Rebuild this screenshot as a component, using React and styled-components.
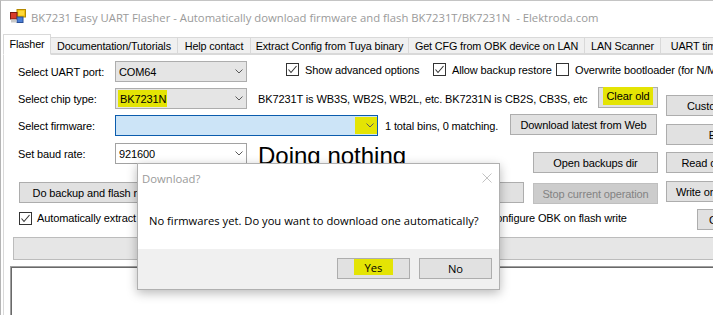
import React from 'react';
import styled, { createGlobalStyle } from 'styled-components';

const Global = createGlobalStyle`
  html, body { margin: 0; padding: 0; background: #fff; overflow: hidden; }
  #root { width: 713px; height: 315px; }
  * { box-sizing: border-box; }
`;

const UI = `"Liberation Sans", Arial, sans-serif`;
const SEGOE = `"Open Sans", "Noto Sans", sans-serif`;
const YELLOW = '#e4e404';

const Window = styled.div`
  position: relative;
  width: 713px;
  height: 315px;
  overflow: hidden;
  background: #fff;
  border-top: 1px solid #c4c4c4;
  border-left: 1px solid #b4b4b4;
  display: flex;
  flex-direction: column;
  font-family: ${UI};
  font-size: 11px;
  letter-spacing: -0.12px;
  color: #000;
`;

const TitleBar = styled.div`
  height: 32px;
  flex: none;
  display: flex;
  align-items: center;
  padding-left: 9px;
  gap: 5px;
`;

const TitleText = styled.span`
  font-family: ${SEGOE};
  font-size: 11.3px;
  letter-spacing: 0;
  color: #9a9a9a;
  white-space: pre;
`;

const TabStrip = styled.div`
  height: 21px;
  flex: none;
  display: flex;
  align-items: flex-end;
  padding-left: 2px;
  position: relative;
  z-index: 1;
`;

const Tab = styled.div`
  width: ${p => p.$w}px;
  height: ${p => (p.$active ? 21 : 17)}px;
  flex: none;
  display: flex;
  align-items: center;
  justify-content: center;
  white-space: nowrap;
  overflow: hidden;
  font-size: 10.8px;
  background: ${p => (p.$active ? '#fff' : '#f0f0f0')};
  border: 1px solid #d9d9d9;
  border-left: ${p => (p.$first ? '1px solid #d9d9d9' : 'none')};
  border-bottom: ${p => (p.$active ? '1px solid #fff' : '1px solid #d9d9d9')};
  padding-bottom: ${p => (p.$active ? 2 : 0)}px;
  margin-bottom: ${p => (p.$active ? -1 : 0)}px;
`;

const TabPage = styled.div`
  flex: 1;
  margin-left: 2px;
  border-top: 1px solid #d9d9d9;
  border-left: 1px solid #d9d9d9;
  display: flex;
  flex-direction: column;
  padding-top: 6px;
  min-height: 0;
`;

const Columns = styled.div`
  height: 176px;
  flex: none;
  display: flex;
`;

const MainCol = styled.div`
  width: 662px;
  flex: none;
  display: flex;
  flex-direction: column;
`;

const RightCol = styled.div`
  flex: 1;
  display: flex;
  flex-direction: column;
  align-items: flex-start;
`;

const Row = styled.div`
  height: ${p => p.$h || 21}px;
  margin-top: ${p => p.$mt || 0}px;
  flex: none;
  display: flex;
  align-items: flex-start;
  padding-left: 14px;
  white-space: nowrap;
`;

const Label = styled.div`
  width: 97px;
  height: 21px;
  flex: none;
  display: flex;
  align-items: center;
`;

const Combo = styled.div`
  width: ${p => p.$w}px;
  height: 21px;
  flex: none;
  display: flex;
  align-items: center;
  padding-left: 3px;
  background: ${p => (p.$focus ? '#cce4f7' : p.$edit ? '#fff' : '#e5e5e5')};
  border: 1px solid ${p => (p.$focus ? '#0b5cad' : p.$edit ? '#a2a2a2' : '#adadad')};
`;

const ComboText = styled.span`
  flex: 1;
  display: flex;
  align-items: center;
`;

const ChevronBox = styled.span`
  width: ${p => (p.$hl ? 22 : 15)}px;
  height: 17px;
  flex: none;
  display: flex;
  align-items: center;
  justify-content: center;
  padding-left: ${p => (p.$hl ? 7 : 0)}px;
  background: ${p => (p.$hl ? YELLOW : 'transparent')};
`;

const Highlight = styled.span`
  background: ${YELLOW};
  height: ${p => p.$h || 17}px;
  display: inline-flex;
  align-items: center;
  padding: 0 ${p => p.$pr ?? 1}px 0 ${p => p.$pl ?? 2}px;
  margin-left: ${p => p.$ml || 0}px;
  margin-top: ${p => p.$mt || 0}px;
  align-self: ${p => (p.$top ? 'flex-start' : 'center')};
`;

const Text = styled.div`
  width: ${p => p.$w}px;
  height: 21px;
  margin-left: ${p => p.$ml || 0}px;
  flex: none;
  display: flex;
  align-items: center;
  overflow: visible;
`;

const BigText = styled.div`
  width: ${p => p.$w}px;
  margin-left: ${p => p.$ml || 0}px;
  margin-top: ${p => p.$mt || 0}px;
  flex: none;
  font-size: 24px;
  line-height: 24px;
  letter-spacing: 0;
  height: 24px;
`;

const Button = styled.div`
  width: ${p => p.$w}px;
  height: 21px;
  margin-left: ${p => p.$ml || 0}px;
  margin-top: ${p => p.$mt || 0}px;
  flex: none;
  display: flex;
  align-items: center;
  justify-content: center;
  white-space: nowrap;
  background: ${p => (p.$disabled ? '#cccccc' : '#e1e1e1')};
  border: 1px solid ${p => (p.$disabled ? '#bfbfbf' : '#adadad')};
  color: ${p => (p.$disabled ? '#838383' : '#000')};
  font-family: ${p => (p.$segoe ? SEGOE : UI)};
  font-size: ${p => (p.$segoe ? 11.2 : 11)}px;
  letter-spacing: ${p => (p.$segoe ? 0 : -0.12)}px;
`;

const Check = styled.div`
  width: ${p => (p.$w ? `${p.$w}px` : 'auto')};
  height: ${p => p.$h || 17}px;
  margin-left: ${p => p.$ml || 0}px;
  flex: none;
  display: flex;
  align-items: center;
  gap: ${p => p.$gap ?? 6}px;
  white-space: nowrap;
`;

const Box = styled.span`
  width: 13px;
  height: 13px;
  flex: none;
  border: 1px solid #333;
  background: #fff;
  display: flex;
  align-items: center;
  justify-content: center;
`;

const Progress = styled.div`
  height: 23px;
  flex: none;
  margin-left: 9px;
  margin-right: -6px;
  background: #e6e6e6;
  border: 1px solid #bcbcbc;
`;

const LogBox = styled.div`
  flex: 1;
  margin: 6px -6px -6px 6px;
  background: #fff;
  border-top: 1px solid #a0a0a0;
  border-left: 1px solid #a0a0a0;
  box-shadow: inset 1px 1px 0 #696969;
`;

const Dialog = styled.div`
  position: absolute;
  left: 136px;
  top: 162px;
  width: 363px;
  height: 127px;
  background: #fff;
  border: 1px solid #b0b0b0;
  box-shadow: 0 3px 10px rgba(0, 0, 0, 0.28);
  display: flex;
  flex-direction: column;
  z-index: 5;
  font-family: ${SEGOE};
  font-size: 11.2px;
  letter-spacing: 0;
`;

const DlgTitle = styled.div`
  height: 28px;
  flex: none;
  display: flex;
  align-items: center;
  justify-content: space-between;
  padding: 0 7px 0 4px;
  color: #9a9a9a;
  font-size: 11.3px;
`;

const DlgBody = styled.div`
  height: 57px;
  flex: none;
  display: flex;
  align-items: center;
  padding-left: 11px;
  color: #000;
  white-space: nowrap;
`;

const DlgFooter = styled.div`
  flex: 1;
  background: #f0f0f0;
  display: flex;
  justify-content: flex-end;
  align-items: flex-start;
  gap: 9px;
  padding: 9px 7px 0 0;
`;

const Chevron = () => (
  <svg width="8" height="5" viewBox="0 0 8 5">
    <polyline points="0.5,0.5 4,4 7.5,0.5" fill="none" stroke="#5a5a5a" strokeWidth="1" />
  </svg>
);

const Tick = () => (
  <svg width="11" height="11" viewBox="0 0 11 11">
    <polyline points="1.5,5.5 4,8.5 9.5,2" fill="none" stroke="#333" strokeWidth="1.1" />
  </svg>
);

const AppIcon = () => (
  <svg width="16" height="16" viewBox="0 0 16 16">
    <rect x="7" y="0.5" width="8.5" height="7.5" fill="#f4c20d" stroke="#b58a00" strokeWidth="1" />
    <rect x="8.5" y="1.8" width="5.5" height="4.5" fill="#ffd83a" />
    <rect x="0.5" y="3.5" width="6.5" height="6.5" fill="#d93a2b" stroke="#7a1a12" strokeWidth="1" />
    <rect x="7" y="8" width="6" height="5.5" fill="#4a7fd6" stroke="#2a4f95" strokeWidth="1" />
    <rect x="1" y="10.5" width="5.5" height="3" fill="#c9c9c9" />
  </svg>
);

const CloseX = () => (
  <svg width="10" height="10" viewBox="0 0 10 10">
    <path d="M0.5 0.5 L9.5 9.5 M9.5 0.5 L0.5 9.5" stroke="#c3c3c3" strokeWidth="1" />
  </svg>
);

const CheckItem = ({ checked, children, ...rest }) => (
  <Check {...rest}>
    <Box>{checked ? <Tick /> : null}</Box>
    <span>{children}</span>
  </Check>
);

const tabs = [
  ['Flasher', 48],
  ['Documentation/Tutorials', 127],
  ['Help contact', 73],
  ['Extract Config from Tuya binary', 158],
  ['Get CFG from OBK device on LAN', 176],
  ['LAN Scanner', 76],
  ['UART timing', 80],
];

export default function App() {
  return (
    <>
      <Global />
      <Window>
        <TitleBar>
          <AppIcon />
          <TitleText>BK7231 Easy UART Flasher - Automatically download firmware and flash BK7231T/BK7231N  - Elektroda.com</TitleText>
        </TitleBar>
        <TabStrip>
          {tabs.map(([t, w], i) => (
            <Tab key={t} $w={w} $active={i === 0} $first={i === 0}>{t}</Tab>
          ))}
        </TabStrip>
        <TabPage>
          <Columns>
            <MainCol>
              <Row>
                <Label>Select UART port:</Label>
                <Combo $w={132}>
                  <ComboText>COM64</ComboText>
                  <ChevronBox><Chevron /></ChevronBox>
                </Combo>
                <CheckItem checked $w={147} $ml={39}>Show advanced options</CheckItem>
                <CheckItem checked $w={123}>Allow backup restore</CheckItem>
                <CheckItem>Overwrite bootloader (for N/M chips)</CheckItem>
              </Row>
              <Row $mt={6}>
                <Label>Select chip type:</Label>
                <Combo $w={132}>
                  <ComboText><Highlight $ml={-1}>BK7231N</Highlight></ComboText>
                  <ChevronBox><Chevron /></ChevronBox>
                </Combo>
                <Text $w={340} $ml={11}>BK7231T is WB3S, WB2S, WB2L, etc. BK7231N is CB2S, CB3S, etc</Text>
                <Button $w={60} $mt={-1}>
                  <Highlight $top $h={18} $mt={-1} $pl={4} $pr={4}>Clear old</Highlight>
                </Button>
              </Row>
              <Row $mt={6}>
                <Label>Select firmware:</Label>
                <Combo $w={263} $focus>
                  <ComboText />
                  <ChevronBox $hl><Chevron /></ChevronBox>
                </Combo>
                <Text $w={125} $ml={7}>1 total bins, 0 matching.</Text>
                <Button $w={147} $mt={-1}>Download latest from Web</Button>
              </Row>
              <Row $mt={7}>
                <Label>Set baud rate:</Label>
                <Combo $w={132} $edit>
                  <ComboText>921600</ComboText>
                  <ChevronBox><Chevron /></ChevronBox>
                </Combo>
                <BigText $w={275} $ml={11} $mt={1}>Doing nothing</BigText>
                <Button $w={125} $mt={9}>Open backups dir</Button>
              </Row>
              <Row $mt={18}>
                <Button $w={148} $ml={1}>Do backup and flash new</Button>
                <Button $w={170} $ml={8}>Do only backup (read)</Button>
                <Button $w={171} $ml={8}>Do only flash (write)</Button>
                <Button $w={125} $ml={9} $mt={1} $disabled>Stop current operation</Button>
              </Row>
              <Row $mt={8} $h={14}>
                <CheckItem checked $w={386} $ml={1} $h={14} $gap={5}>Automatically extract Tuya config</CheckItem>
                <CheckItem checked $h={14} $gap={6}>Automatically configure OBK on flash write</CheckItem>
              </Row>
            </MainCol>
            <RightCol>
              <Button $w={127} $mt={34}>Custom operation</Button>
              <Button $w={127} $mt={8}>Erase all</Button>
              <Button $w={127} $mt={7}>Read only (no flash)</Button>
              <Button $w={127} $mt={8}>Write only (no backup)</Button>
              <Button $w={62} $mt={7} $ml={31}>Change</Button>
            </RightCol>
          </Columns>
          <Progress />
          <LogBox />
        </TabPage>

        <Dialog>
          <DlgTitle>
            <span>Download?</span>
            <CloseX />
          </DlgTitle>
          <DlgBody>No firmwares yet. Do you want to download one automatically?</DlgBody>
          <DlgFooter>
            <Button $w={73} $segoe>
              <Highlight $top $h={16} $pl={11} $pr={11}>Yes</Highlight>
            </Button>
            <Button $w={73} $segoe>No</Button>
          </DlgFooter>
        </Dialog>
      </Window>
    </>
  );
}
